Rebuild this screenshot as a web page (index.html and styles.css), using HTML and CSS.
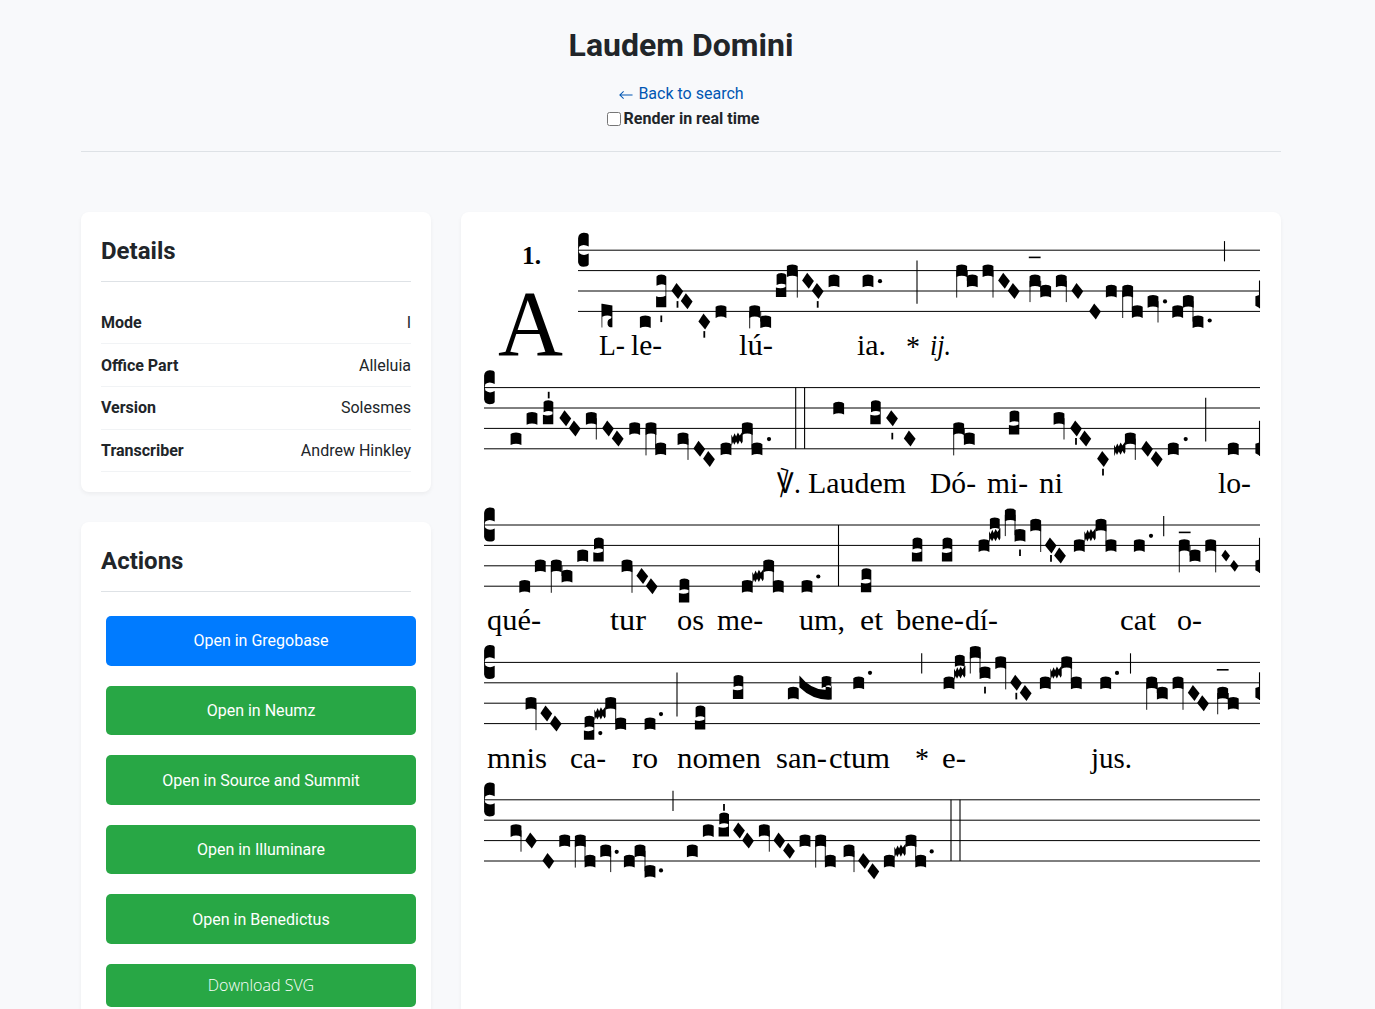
FILE: index.html
```html
<!DOCTYPE html>
<html lang="en">
<head>
<meta charset="utf-8">
<title>Laudem Domini</title>
<link rel="stylesheet" href="styles.css">
</head>
<body>
<div class="container">
  <header class="page-header">
    <h1>Laudem Domini</h1>
    <a class="back" href="#"><svg class="arrow" viewBox="0 0 16 12"><path d="M15.5 6H2M6 2.2L2 6l4 3.8"/></svg>Back to search</a>
    <label class="realtime"><input type="checkbox"><span>Render in real time</span></label>
  </header>
  <main class="layout">
    <aside class="sidebar">
      <section class="card">
        <h2>Details</h2>
        <ul class="facts">
          <li><strong>Mode</strong><span>I</span></li>
          <li><strong>Office Part</strong><span>Alleluia</span></li>
          <li><strong>Version</strong><span>Solesmes</span></li>
          <li><strong>Transcriber</strong><span>Andrew Hinkley</span></li>
        </ul>
      </section>
      <section class="card">
        <h2>Actions</h2>
        <nav class="actions">
          <a class="btn btn-primary" href="#">Open in Gregobase</a>
          <a class="btn" href="#">Open in Neumz</a>
          <a class="btn" href="#">Open in Source and Summit</a>
          <a class="btn" href="#">Open in Illuminare</a>
          <a class="btn" href="#">Open in Benedictus</a>
          <button class="btn btn-download" type="button">Download SVG</button>
        </nav>
      </section>
    </aside>
    <section class="card score-card">
      <svg class="score" id="score" viewBox="481 232 780 800">
        <defs>
          <path id="punctum" d="M-5.4-4.6Q-4-6.2 0-6.2T5.4-4.6V6.5Q0 3.9-5.4 6.5Z"/>
          <path id="diamond" d="M-.8-8L5.9.2.8 8-5.9-.2Z"/>
          <path id="smalldiamond" d="M-.5-5.8L4.3.2.5 6-4.3-.2Z"/>
          <path id="podatus2" d="M-5.4-3.4Q0-1.6 4.2-4V-6.4Q0-8.3-4.7-6V-16.2Q-3.6-18 0-18T5-16.2V6H-5.4Z"/>
          <path id="podatus3" d="M-5.2-5Q0-3 4.2-5.4V-16Q0-18.3-4.8-15.4V-24.8Q-3.6-26.6 0-26.6T5-24.8V6H-5.2Z"/>
          <path id="upper" d="M-4.8-6Q-3.7-7.6 0-7.6T5-6V7.5H4.2V3.8Q0 2-4.8 4.4Z"/>
          <path id="quilisma" d="M-5.7-4L-4.2-1.2-2.4-5.4-.9-2.2.9-6.2 2.7-3.2 5.7-7.2V3L4.6 5.2 2.8 2 .9 6-.9 2.8-2.7 6.2-4 3.4-5.5 7.4Z"/>
          <path id="liquescent" d="M-5.6-7.6H-4.8L5.4-6V15.8Q1.5 16.2.6 13 0 8 3.8 7.2 4.6 6 4.4 5 0 3-4.7 5.4V16H-5.4Z"/>
          <path id="porrectus" d="M-16.3-17.4Q-4.5-2.8 9.9-3.2 10-4 10-7Q13-8.8 15.7-6.6V-15.4Q14.5-17 10.8-17T6-15.4V-5Q10-7.3 15.2-5.2V-16H16V6.5Q-2 8-16.3-5.8Z"/>
          <path id="clef" d="M-5.3-12Q-4.7-17.2 0-17.4T5.3-15.2V-3.6Q0-6.6-4-3.6-5.4 0-4 3Q0 6.4 5.3 3.4V14.4Q4.4 16.6 0 16.6T-5.3 12Z"/>
          <circle id="dot" r="2.1"/>
          <path id="ictus" d="M-.9-3.3H.9V3.3H-.9Z"/>
          <path id="episema" d="M-5.9-.8H5.9V.8H-5.9Z"/>
        </defs>
        <g class="lyrics">
          <text x="522" y="264" textLength="19" class="mode">1.</text>
          <text x="498" y="355" textLength="65" class="initial">A</text>
          <text x="599" y="355.4" textLength="26">L-</text>
          <text x="631" y="355.4" textLength="31">le-</text>
          <text x="739" y="355.4" textLength="34">lú-</text>
          <text x="857" y="355.4" textLength="29">ia.</text>
          <text x="906" y="356" textLength="14">*</text>
          <text x="930" y="355.4" textLength="21" class="rubric">ij.</text>
          <text x="777" y="492.8" textLength="24">℣.</text>
          <text x="808" y="492.8" textLength="98">Laudem</text>
          <text x="930" y="492.8" textLength="46">Dó-</text>
          <text x="987" y="492.8" textLength="41">mi-</text>
          <text x="1039" y="492.8" textLength="24">ni</text>
          <text x="1218" y="492.8" textLength="33">lo-</text>
          <text x="487" y="630.2" textLength="54">qué-</text>
          <text x="610" y="630.2" textLength="36">tur</text>
          <text x="677" y="630.2" textLength="27">os</text>
          <text x="717" y="630.2" textLength="46">me-</text>
          <text x="799" y="630.2" textLength="46">um,</text>
          <text x="860" y="630.2" textLength="23">et</text>
          <text x="896" y="630.2" textLength="68">bene-</text>
          <text x="965" y="630.2" textLength="33">dí-</text>
          <text x="1120" y="630.2" textLength="36">cat</text>
          <text x="1177" y="630.2" textLength="25">o-</text>
          <text x="487" y="767.6" textLength="60">mnis</text>
          <text x="570" y="767.6" textLength="36">ca-</text>
          <text x="632" y="767.6" textLength="26">ro</text>
          <text x="677" y="767.6" textLength="84">nomen</text>
          <text x="776" y="767.6" textLength="51">san-</text>
          <text x="829" y="767.6" textLength="61">ctum</text>
          <text x="915" y="768" textLength="14">*</text>
          <text x="942" y="767.6" textLength="24">e-</text>
          <text x="1091" y="767.6" textLength="41">jus.</text>
        </g>
      </svg>
    </section>
  </main>
</div>
<script src="score.js"></script>
</body>
</html>
```
FILE: styles.css
```css
* { box-sizing: border-box; }
body {
  margin: 0;
  background: #f8f9fb;
  color: #212529;
  font: 16px/1.6 Roboto, "Liberation Sans", sans-serif;
  height: 1009px;
  overflow: hidden;
}
.container { width: 1202px; margin-left: 80px; padding: 20px 1px 0; }
.page-header {
  display: flex;
  flex-direction: column;
  align-items: center;
  height: 132.4px;
  margin-bottom: 60px;
  border-bottom: 1px solid #dee2e6;
}
h1 { margin: 0 0 10px; font-size: 32px; line-height: 51.2px; font-weight: 700; }
.back { display: flex; align-items: center; gap: 5px; height: 25px; color: #0056b3; text-decoration: none; }
.arrow { width: 15px; height: 12px; margin-top: 2px; fill: none; stroke: currentColor; stroke-width: 1.1; }
.realtime { display: flex; align-items: center; height: 25px; padding-left: 4px; font-weight: 700; }
.realtime input { width: 14px; height: 14px; margin: 1px 3px 0 0; }
.layout { display: grid; grid-template-columns: 350px 820px; gap: 30px; align-items: start; }
.sidebar { display: flex; flex-direction: column; gap: 30px; }
.card { background: #fff; border-radius: 8px; padding: 20px; box-shadow: 0 2px 4px rgba(0, 0, 0, .05); }
h2 { margin: 0 0 20px; padding: 1px 0 10px; border-bottom: 1px solid #dee2e6; font-size: 24px; line-height: 37.4px; font-weight: 700; }
.facts { list-style: none; margin: 0; padding: 0; }
.facts li { display: flex; justify-content: space-between; padding: 8px 0; border-bottom: 1px solid #f1f3f5; }
.facts li:nth-child(2) { padding: 8.4px 0 7.6px; }
.actions { display: flex; flex-direction: column; gap: 20px; width: 310px; margin: 24.6px 0 0 5px; }
.btn {
  padding: 12.3px 20px 11.7px;
  border: 0;
  border-radius: 5px;
  background: #28a745;
  color: #fff;
  text-align: center;
  text-decoration: none;
}
.btn-primary { background: #007bff; }
.btn-download { height: 43px; padding: 0 0 1px; font: 300 16px "Open Sans", "Noto Sans", sans-serif; }
.score-card { height: 860px; }
.score { display: block; width: 780px; height: 800px; }
.lyrics { font: 29px "Liberation Serif", "DejaVu Serif", serif; }
.lyrics .mode { font-size: 26px; font-weight: 700; }
.lyrics .initial { font-size: 94px; }
.lyrics .rubric { font-style: italic; }
.staff { stroke: #000; stroke-width: 1; }
.stem { stroke: #000; stroke-width: .9; }
.bar { stroke: #000; stroke-width: 1.1; }
```
FILE: score.js
```js
const STEP = 10.2;
const FIRST_STAFF = 250.2;
const STAFF_PITCH = 137.4;

// Pitch letters map to staff steps counted down from the top line (j).
const step = p => 'kjihgfedc'.indexOf(p) - 1;

// Each token is kind:x:pitch (or kind:x:offset for marks placed by pixel offset).
// p punctum, v virga, w clivis (note x, second x, both pitches), t torculus end,
// n diamond, s small diamond, o podatus second, O podatus third, q quilisma,
// u upper note, . dot, i ictus, e episema, B bar, C custos, L liquescent, S porrectus
const systems = [
  'L:607:d p:645.3:c O:661.3:e i:661.3:68.6 n:677.3:f i:677.5:54.2 n:686.7:e n:704.3:c i:704.3:84.2 p:721:d w:754.7:d:765.7:c o:781.3:f v:792.3:h n:808:g n:817.7:f i:817.7:54.2 p:834:g ' +
  'p:868:g .:880:31 B:917:10.2:53.5 w:961.7:h:972.3:g v:988:h n:1004:g n:1013.7:f e:1034.7:7.2 w:1035:g:1045.7:f v:1061.3:g n:1077.3:f n:1095:d p:1111.3:f w:1127.7:f:1137.3:d v:1153:e .:1165:51.2 p:1177.7:d t:1188.3:e:1198:c .:1209.7:70.3 B:1224.5:-9.1:11.2 C:1256:e',
  'p:516:e p:532:g o:548.3:g i:548.7:7.5 n:565.3:g n:574.7:f v:591.3:g n:608:f n:617.7:e p:634.7:f w:651:f:660.7:d v:683:e n:699.3:d n:709:c p:726:d q:737:e t:747.3:f:757:d .:769:51.5 B:795.7:0:61.2 B:804.6:0:61.2 p:838.7:h ' +
  'o:875.7:g n:892:g i:892.3:48.5 n:909.7:e w:958.7:f:969.3:e o:1014.3:f v:1059:g n:1076:f i:1076:53.8 n:1085.3:e n:1103:c i:1103:84.5 q:1119.7:d v:1130.3:e n:1147:d n:1156.7:c p:1173.3:d .:1185.7:51.5 B:1205.7:10.2:54 p:1233.3:d C:1256:d',
  'p:524.7:d p:540.3:f w:556.3:f:567:e p:582.7:g o:598.7:g v:627:f n:642.3:e n:651.7:d o:684.3:c p:747.3:d q:758:e t:768.7:f:778.3:d p:807:d .:818.3:51.5 B:838.5:0:61.2 ' +
  'o:866.3:d o:917.3:g o:947.3:g p:984:h q:994.7:i u:994.7:j w:1010.3:k:1020:i i:1020:27.8 v:1035.7:j n:1050.7:h i:1051:33.4 n:1060:g p:1079.3:h q:1090:i t:1101:j:1111:h p:1139.3:h .:1151:10.8 B:1163.7:-9.1:11.2 e:1184.7:7.4 w:1184.3:h:1195:g v:1210.7:h s:1225.7:g s:1234.3:f C:1256:f',
  'v:531:f n:546.3:e n:555.7:d o:589.3:c .:600.3:70.7 q:600:e t:610.7:f:620.7:d p:650:d .:661:51.7 B:677:10.2:54 o:700.3:d o:738.3:g p:793.3:g S:815.7:g p:858.7:h ' +
  '.:870:10.4 B:921.7:-9.1:11.2 p:949:h q:959.7:i u:959.7:j w:975.3:k:985:i i:985:27.7 v:1000.7:j n:1016:h i:1016.3:33.7 n:1025.7:g p:1045.3:h q:1056:i t:1066.7:j:1076.3:h p:1105.7:h .:1117:10.5 B:1130.5:-9.1:11.2 w:1151.7:h:1162.3:g v:1178:h n:1193.7:g n:1203:f e:1222.7:7.4 w:1222.7:g:1233.3:f C:1256:g',
  'v:516:g n:531:f n:548.3:d p:564.7:f w:580.3:f:590:d v:605.7:e .:616.7:52 p:629.3:d t:640:e:650:c .:661:70.6 B:673:-9.1:11.2 p:692.3:e p:708.3:g o:724:g i:724:7.6 n:739:g n:748:f v:764.3:g n:779.3:f n:789:e p:805:f w:820.7:f:830.3:d v:849:e n:864:d n:873.3:c p:889.3:d q:900:e t:911:f:920.7:d .:931.7:51.6 B:951:0:61.2 B:960:0:61.2'
];

const glyphs = { p: 'punctum', n: 'diamond', s: 'smalldiamond', o: 'podatus2', O: 'podatus3', q: 'quilisma', u: 'upper', L: 'liquescent', S: 'porrectus' };
const marks = { '.': 'dot', i: 'ictus', e: 'episema' };
const use = (id, x, y) => `<use href="#${id}" x="${x}" y="${y.toFixed(1)}"/>`;
const line = (cls, x1, y1, x2, y2) => `<line class="${cls}" x1="${x1}" y1="${y1.toFixed(1)}" x2="${x2}" y2="${y2.toFixed(1)}"/>`;
const stemLength = s => (s === 6 ? 17 : s % 2 === 0 ? 27 : 21.3);

function drawToken(token, top) {
  const [kind, xs, a, bx, b] = token.split(':');
  const x = +xs;
  if (marks[kind]) return use(marks[kind], x, top + +a);
  if (kind === 'B') return line('bar', x, top + +a, x, top + +bx);
  const s = step(a);
  const y = top + s * STEP;
  if (glyphs[kind]) return use(glyphs[kind], x, y);
  if (kind === 'v') return use('punctum', x, y) + line('stem', x + 5, y, x + 5, y + stemLength(s));
  if (kind === 'C') {
    return `<path d="M${x - .6} ${y - 5}L${x + 4} ${y - 6.5}V${y + 7}L${x - .6} ${y + 4.5}Z"/>` +
      line('bar', x + 3.5, y - (s % 2 ? 20.7 : 28), x + 3.5, y + 7);
  }
  const y2 = top + step(b) * STEP;
  let out = use('punctum', x, y) + use('punctum', bx, y2) + line('stem', +bx - 5, y, +bx - 5, y2);
  if (kind === 'w') out += line('stem', x - 5, y, x - 5, y + stemLength(s));
  return out;
}

let notation = '';
systems.forEach((tokens, k) => {
  const top = FIRST_STAFF + k * STAFF_PITCH;
  const left = k === 0 ? 578 : 484;
  for (let i = 0; i < 4; i++) notation += line('staff', left, top + i * 20.4, 1260, top + i * 20.4);
  notation += use('clef', left + 5.4, top);
  tokens.split(' ').forEach(t => { notation += drawToken(t, top); });
});
document.getElementById('score').insertAdjacentHTML('beforeend', notation);
document.querySelectorAll('.lyrics text').forEach(t => t.setAttribute('lengthAdjust', 'spacingAndGlyphs'));
```
